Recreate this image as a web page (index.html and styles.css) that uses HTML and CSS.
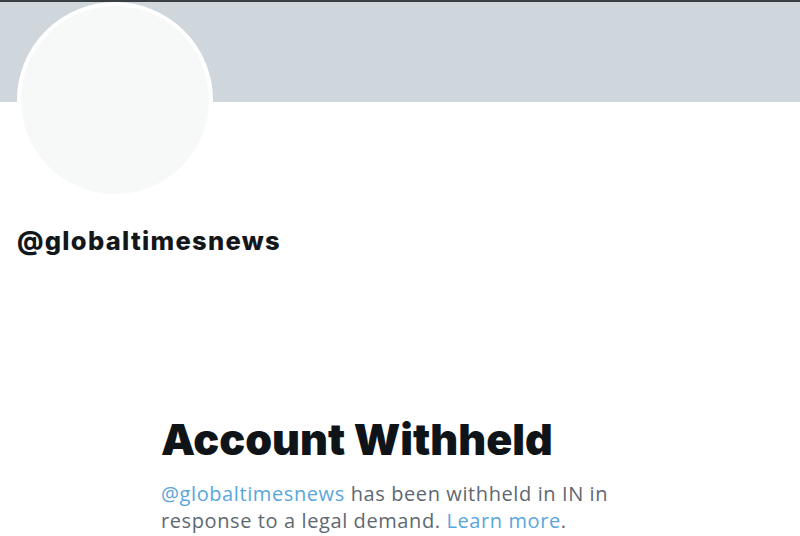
FILE: index.html
```html
<!DOCTYPE html>
<html>
<head>
<meta charset="utf-8">
<link rel="stylesheet" href="styles.css">
</head>
<body>
<div class="page">
  <div class="topline"></div>
  <div class="header">
    <div class="banner"></div>
    <div class="avatar"></div>
  </div>
  <div class="handle">@globaltimesnews</div>
  <div class="notice">
    <h1 class="title">Account Withheld</h1>
    <p class="desc"><span class="link">@globaltimesnews</span> has been withheld in IN in response to a legal demand. <span class="link">Learn more</span>.</p>
  </div>
</div>
</body>
</html>
```
FILE: styles.css
```css
html, body {
  margin: 0;
  padding: 0;
  background: #ffffff;
}
.page {
  width: 800px;
  height: 536px;
  overflow: hidden;
  font-family: "Liberation Sans", Arial, sans-serif;
  color: #0f1419;
}
.topline {
  height: 2px;
  background: #3a3f44;
}
.header {
  position: relative;
  height: 100px;
}
.banner {
  height: 100px;
  background: #cfd7dc;
}
.avatar {
  position: absolute;
  left: 17px;
  top: 0px;
  width: 188px;
  height: 188px;
  border-radius: 50%;
  background: #f7f9f9;
  border: 4px solid #ffffff;
}
.handle {
  margin-top: 125px;
  margin-left: 17px;
  font-family: Inter, "Liberation Sans", sans-serif;
  font-size: 25.5px;
  font-weight: 800;
  letter-spacing: 1.3px;
  line-height: 28px;
  color: #14171a;
}
.notice {
  margin-left: 161px;
  margin-top: 159px;
  width: 470px;
}
.title {
  margin: 0;
  font-family: Inter, "Liberation Sans", sans-serif;
  font-size: 43px;
  font-weight: 900;
  line-height: 50px;
  color: #0f1419;
}
.desc {
  margin: 16px 0 0 0;
  font-family: "Open Sans", "Liberation Sans", sans-serif;
  font-size: 20px;
  letter-spacing: 0.6px;
  line-height: 27px;
  color: #5e6871;
}
.link {
  color: #5aa6dc;
}
```
